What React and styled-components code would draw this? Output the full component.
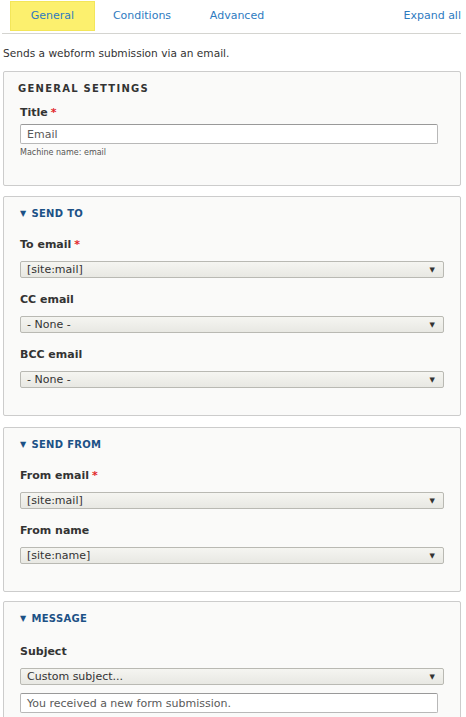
import styled, { createGlobalStyle } from 'styled-components'

const Global = createGlobalStyle`
  body {
    margin: 0;
    background: #fff;
    font-family: "DejaVu Sans", "Liberation Sans", sans-serif;
    color: #333;
  }
`

const Page = styled.div`
  padding: 1px 5px 0 2px;
`

const Tabs = styled.nav`
  display: flex;
  align-items: flex-start;
  height: 32px;
  border-bottom: 1px solid #d4d4d0;
  padding-left: 8px;
`

const Tab = styled.a`
  display: flex;
  align-items: center;
  justify-content: center;
  width: ${p => p.w}px;
  height: 30px;
  padding-bottom: 1px;
  box-sizing: border-box;
  font-size: 11px;
  color: #2e7bbf;
  text-decoration: none;
  background: ${p => (p.active ? '#fcf06e' : 'transparent')};
  border: 1px solid ${p => (p.active ? '#f3e65a' : 'transparent')};
`

const ExpandAll = styled.a`
  margin-left: auto;
  margin-top: 8px;
  font-size: 11px;
  color: #2e7bbf;
  text-decoration: none;
`

const Description = styled.p`
  margin: 13px 0 12px 1px;
  font-size: 10.6px;
  color: #333;
`

const Box = styled.fieldset`
  margin: 0 0 ${p => p.mb ?? 10}px 1px;
  padding: 0 17px ${p => p.pb}px 16px;
  border: 1px solid #ccc;
  border-radius: 2px;
  background: #fafaf9;
  min-width: 0;
`

const Legend = styled.div`
  padding-top: 11px;
  margin-left: ${p => (p.plain ? -2 : 0)}px;
  font-size: 10px;
  font-weight: bold;
  letter-spacing: ${p => (p.plain ? '1.25px' : '0.3px')};
  text-transform: uppercase;
  color: ${p => (p.plain ? '#333' : '#1c5186')};
  line-height: 12px;
  margin-bottom: ${p => p.mb}px;
`

const Arrow = styled.span`
  display: inline-block;
  font-size: 8px;
  margin-right: 5px;
  vertical-align: 1px;
`

const Label = styled.div`
  font-size: 11px;
  font-weight: bold;
  color: #333;
  line-height: 14px;
  margin-top: ${p => p.mt || 0}px;
  margin-bottom: ${p => p.mb}px;
`

const Req = styled.span`
  color: #e1262b;
  margin-left: 3px;
`

const TextInput = styled.div`
  box-sizing: border-box;
  width: ${p => p.w}px;
  height: 20px;
  padding: 0 6px;
  display: flex;
  align-items: center;
  border: 1px solid #b8b8b8;
  border-top-color: #999;
  border-radius: 2px;
  background: #fff;
  font-size: 11px;
  color: #595959;
  margin-top: ${p => p.mt || 0}px;
`

const Select = styled.div`
  box-sizing: border-box;
  width: 424px;
  height: 17px;
  padding: 0 8px 0 6px;
  display: flex;
  align-items: center;
  justify-content: space-between;
  border: 1px solid #b9b9b3;
  border-radius: 2px;
  background: linear-gradient(#f5f5f1, #e8e8e3);
  font-size: 11px;
  color: #333;
`

const Caret = styled.span`
  font-size: 7px;
  color: #333;
`

const Help = styled.div`
  font-size: 8px;
  line-height: 10px;
  color: #555;
  margin-top: 4px;
`

const Dropdown = ({ value }) => (
  <Select>
    <span>{value}</span>
    <Caret>▼</Caret>
  </Select>
)

const App = () => {
  return (
    <>
      <Global />
      <Page>
        <Tabs>
          <Tab active w={85}>General</Tab>
          <Tab w={94}>Conditions</Tab>
          <Tab w={96}>Advanced</Tab>
          <ExpandAll>Expand all</ExpandAll>
        </Tabs>
        <Description>Sends a webform submission via an email.</Description>

        <Box pb={27}>
          <Legend plain mb={11}>General settings</Legend>
          <Label mb={4}>Title<Req>*</Req></Label>
          <TextInput w={418}>Email</TextInput>
          <Help>Machine name: email</Help>
        </Box>

        <Box pb={27} mb={11}>
          <Legend mb={18}><Arrow>▼</Arrow>Send to</Legend>
          <Label mb={9}>To email<Req>*</Req></Label>
          <Dropdown value="[site:mail]" />
          <Label mt={15} mb={9}>CC email</Label>
          <Dropdown value="- None -" />
          <Label mt={15} mb={9}>BCC email</Label>
          <Dropdown value="- None -" />
        </Box>

        <Box pb={27} mb={9}>
          <Legend mb={18}><Arrow>▼</Arrow>Send from</Legend>
          <Label mb={9}>From email<Req>*</Req></Label>
          <Dropdown value="[site:mail]" />
          <Label mt={15} mb={9}>From name</Label>
          <Dropdown value="[site:name]" />
        </Box>

        <Box pb={27}>
          <Legend mb={20}><Arrow>▼</Arrow>Message</Legend>
          <Label mb={9}>Subject</Label>
          <Dropdown value="Custom subject..." />
          <TextInput w={418} mt={8}>You received a new form submission.</TextInput>
        </Box>
      </Page>
    </>
  )
}

export default App
